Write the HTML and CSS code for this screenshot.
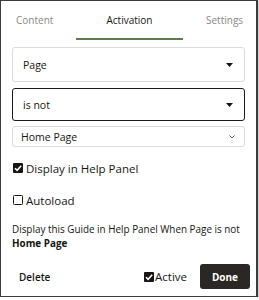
FILE: index.html
```html
<!DOCTYPE html>
<html>
<head>
<meta charset="utf-8">
<link rel="stylesheet" href="styles.css">
</head>
<body>
<div class="frame">
  <div class="tabs">
    <div class="tab tab-first">Content</div>
    <div class="tab tab-active">Activation</div>
    <div class="tab tab-last">Settings</div>
  </div>
  <div class="body">
    <div class="select select-a">
      <span class="sel-text">Page</span>
      <svg class="caret" width="7" height="4" viewBox="0 0 7 4"><path d="M0 0H7L3.5 4Z" fill="#161513"/></svg>
    </div>
    <div class="select select-b">
      <span class="sel-text">is not</span>
      <svg class="caret" width="7" height="4" viewBox="0 0 7 4"><path d="M0 0H7L3.5 4Z" fill="#161513"/></svg>
    </div>
    <div class="select select-c">
      <span class="sel-text-c">Home Page</span>
      <svg class="chev" width="6" height="4" viewBox="0 0 6 4"><path d="M0.5 0.5L3 3L5.5 0.5" fill="none" stroke="#555" stroke-width="1"/></svg>
    </div>
    <div class="check check-1">
      <svg class="box" width="10" height="10" viewBox="0 0 10 10"><rect x="0" y="0" width="10" height="10" rx="1" fill="#161513"/><path d="M2 5.2L4.1 7.3L8.2 2.8" fill="none" stroke="#fff" stroke-width="1.6"/></svg>
      <span class="check-label">Display in Help Panel</span>
    </div>
    <div class="check check-2">
      <svg class="box" width="10" height="10" viewBox="0 0 10 10"><rect x="0.5" y="0.5" width="9" height="9" rx="1" fill="#fff" stroke="#161513" stroke-width="1"/></svg>
      <span class="check-label">Autoload</span>
    </div>
    <p class="desc">Display this Guide in Help Panel When Page is not <b>Home Page</b></p>
    <div class="footer">
      <span class="delete">Delete</span>
      <div class="active">
        <svg class="box" width="10" height="10" viewBox="0 0 10 10"><rect x="0" y="0" width="10" height="10" rx="1" fill="#161513"/><path d="M2 5.2L4.1 7.3L8.2 2.8" fill="none" stroke="#fff" stroke-width="1.6"/></svg>
        <span class="active-label">Active</span>
      </div>
      <button class="done">Done</button>
    </div>
  </div>
</div>
</body>
</html>
```
FILE: styles.css
```css
* { box-sizing: border-box; }
html, body { margin: 0; padding: 0; background: #fff; }
body { font-family: "Open Sans", "Liberation Sans", sans-serif; color: #161513; }
.frame {
  width: 258px;
  height: 297px;
  border: 1px solid #3c3c3c;
  border-right-width: 2px;
  box-shadow: 1px 1px 1px #cfcfcf;
  background: #fff;
  display: flex;
  flex-direction: column;
}
.tabs {
  display: flex;
  height: 39px;
  font-size: 10px;
}
.tab {
  display: flex;
  align-items: center;
  color: #8b8986;
  padding-bottom: 2px;
}
.tab-first { width: 75px; padding-left: 15px; }
.tab-active {
  width: 107px;
  justify-content: center;
  color: #161513;
  font-weight: 500;
  border-bottom: 2px solid #5f7a4d;
  padding-bottom: 0;
}
.tab-last { padding-left: 23px; }
.body {
  padding: 7px 11px 0 11px;
  display: flex;
  flex-direction: column;
}
.select {
  display: flex;
  align-items: center;
  justify-content: space-between;
  border: 1px solid #dcdbd8;
  border-radius: 3px;
  font-size: 10.5px;
}
.select-a { height: 35px; padding: 0 11px 0 10px; }
.select-b { height: 33px; margin-top: 6px; padding: 0 11px 0 10px; border: 1px solid #1b1a18; border-radius: 3px; }
.select-c { height: 21px; margin-top: 5px; padding: 0 9px 0 8px; }
.sel-text-c { font-size: 10.5px; }
.caret { display: block; }
.chev { display: block; }
.check {
  display: flex;
  align-items: center;
  gap: 3px;
  font-size: 11.5px;
}
.check .box { flex: none; margin-left: 1px; }
.check-1 { margin-top: 14px; height: 14px; }
.check-2 { margin-top: 18px; height: 14px; }
.desc {
  margin: 16px 0 0 0;
  font-size: 9.9px;
  line-height: 13.5px;
}
.desc b { font-weight: 700; }
.footer {
  display: flex;
  align-items: center;
  margin-top: 14px;
  height: 25px;
}
.delete {
  font-size: 10px;
  font-weight: 600;
  margin-left: 7px;
}
.active {
  margin-left: auto;
  display: flex;
  align-items: center;
  gap: 1px;
  font-size: 11.5px;
}
.done {
  margin-left: 13px;
  margin-right: -5px;
  width: 50px;
  height: 25px;
  border: none;
  border-radius: 3px;
  background: #2b2724;
  color: #fff;
  font-family: "Open Sans", "Liberation Sans", sans-serif;
  font-weight: 700;
  font-size: 10px;
  padding: 0;
}
```
